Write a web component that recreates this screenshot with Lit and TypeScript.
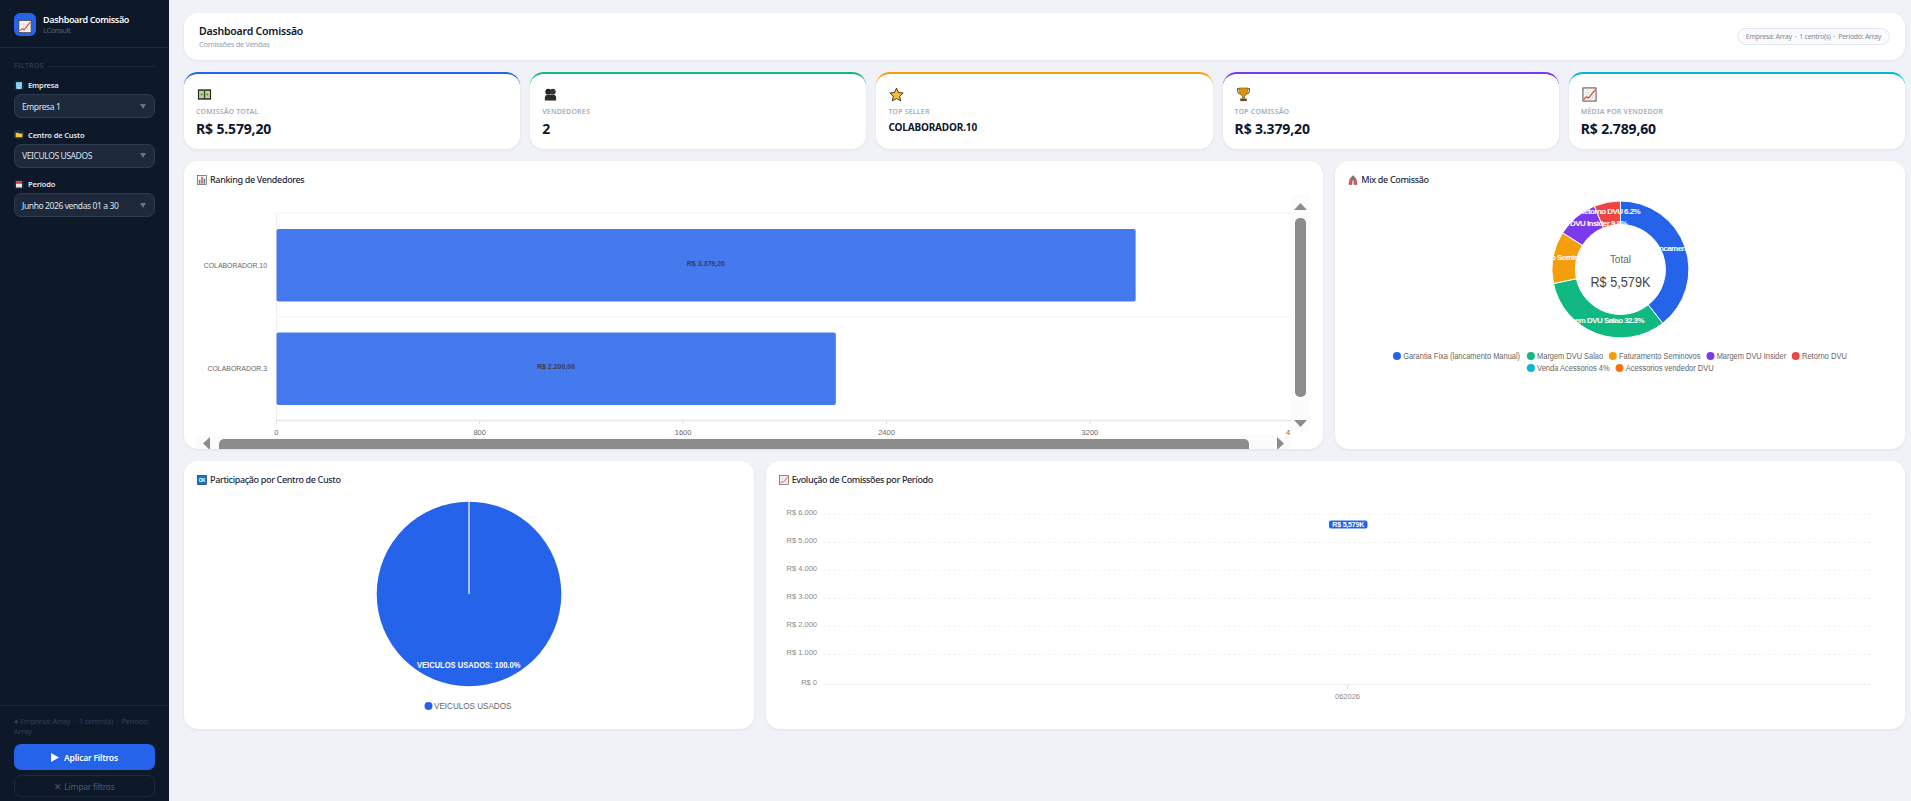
import { LitElement, html, svg, css } from 'lit';
import { customElement } from 'lit/decorators.js';

const CHART_FONT = "'Liberation Sans', Arial, sans-serif";

// icons are small hand drawn stand-ins for the emoji used by the dashboard
const icons = {
  trend: html`<svg viewBox="0 0 16 16" width="100%" height="100%"><rect x="1" y="1" width="14" height="14" fill="#f4f4f4" stroke="#444" stroke-width="1"/><path d="M1 6h14M1 11h14M6 1v14M11 1v14" stroke="#d6d6d6" stroke-width=".6"/><path d="M2 13l3-2.500 2 1.200L14 3" fill="none" stroke="#e5483c" stroke-width="1.300"/></svg>`,
  building: html`<svg viewBox="0 0 12 12" width="100%" height="100%"><rect x="2" y="1.500" width="8" height="9" fill="#7cc4ee"/><path d="M3.500 3.500h1.500M7 3.500h1.500M3.500 6h1.500M7 6h1.500" stroke="#f2fbff" stroke-width="1"/><rect x="5" y="8" width="2" height="2.500" fill="#eef6fb"/></svg>`,
  folder: html`<svg viewBox="0 0 12 12" width="100%" height="100%"><path d="M1.500 3.500h3.500l1 1h4.500v5h-9z" fill="#fbc531"/></svg>`,
  calendar: html`<svg viewBox="0 0 12 12" width="100%" height="100%"><rect x="2" y="2" width="8" height="8" fill="#e8e8e8"/><rect x="2" y="2" width="8" height="3" fill="#d13b3b"/></svg>`,
  money: html`<svg viewBox="0 0 16 16" width="100%" height="100%"><rect x="1" y="2.500" width="14" height="11" fill="#222"/><rect x="2.200" y="4" width="11.600" height="8" fill="#b9d98c"/><rect x="7.300" y="4" width="1.400" height="8" fill="#3a3a3a"/><circle cx="5" cy="8" r="1.100" fill="#5d8a3a"/><circle cx="11" cy="8" r="1.100" fill="#5d8a3a"/></svg>`,
  people: html`<svg viewBox="0 0 16 16" width="100%" height="100%"><circle cx="5.600" cy="5" r="3.100" fill="#222"/><circle cx="10.400" cy="5" r="3.100" fill="#333"/><path d="M2 14.500v-3.200c0-1.600 1.400-3 3-3h6c1.600 0 3 1.400 3 3v3.200z" fill="#2b2b2b"/></svg>`,
  star: html`<svg viewBox="0 0 16 16" width="100%" height="100%"><path d="M8 1.200l2.100 4.600 5 .6-3.700 3.400 1 5L8 12.300l-4.400 2.500 1-5L.9 6.400l5-.6z" fill="#fbb92d" stroke="#222" stroke-width=".9" stroke-linejoin="round"/></svg>`,
  trophy: html`<svg viewBox="0 0 16 16" width="100%" height="100%"><path d="M3.500 2H1.500c0 3 1 5 3.500 5.500M12.500 2h2c0 3-1 5-3.500 5.500" fill="none" stroke="#7a5200" stroke-width="1.100"/><path d="M3.500 1h9c0 5-1.500 8-3.300 8.600V12h-2.400V9.600C5 9 3.500 6 3.500 1z" fill="#d9950f" stroke="#6b4700" stroke-width=".6"/><rect x="4.500" y="12.300" width="7" height="2.700" fill="#6b4a22"/></svg>`,
  bars: html`<svg viewBox="0 0 16 16" width="100%" height="100%"><rect x=".7" y=".7" width="14.600" height="14.600" fill="#f6f6f6" stroke="#444" stroke-width="1"/><rect x="3" y="8" width="2.400" height="6" fill="#2f9e44"/><rect x="6.800" y="3" width="2.400" height="11" fill="#e5483c"/><rect x="10.600" y="6" width="2.400" height="8" fill="#2f7fd6"/></svg>`,
  mix: html`<svg viewBox="0 0 16 16" width="100%" height="100%"><path d="M7 2.500C4 4 1.500 9 1.500 15h5V9zM9 2.500C12 4 14.500 9 14.500 15h-5V9z" fill="#e0605c" stroke="#5b2b2b" stroke-width=".7"/><rect x="6.900" y="1" width="2.200" height="8" fill="#2d7a78"/></svg>`,
  ok: html`<svg viewBox="0 0 16 16" width="100%" height="100%"><rect x=".5" y=".5" width="15" height="15" fill="#0a78d4" stroke="#123" stroke-width=".8"/><text x="8" y="11" font-size="7.500" font-weight="700" text-anchor="middle" fill="#fff" font-family=${CHART_FONT}>OK</text></svg>`,
};

const kpis = [
  { icon: icons.money, label: 'Comissão Total', value: 'R$ 5.579,20', color: '#2563eb' },
  { icon: icons.people, label: 'Vendedores', value: '2', color: '#10b981' },
  { icon: icons.star, label: 'Top Seller', value: 'COLABORADOR.10', color: '#f59e0b', small: true },
  { icon: icons.trophy, label: 'Top Comissão', value: 'R$ 3.379,20', color: '#7c3aed' },
  { icon: icons.trend, label: 'Média por Vendedor', value: 'R$ 2.789,60', color: '#06b6d4' },
];

const filters = [
  { icon: icons.building, label: 'Empresa', value: 'Empresa 1' },
  { icon: icons.folder, label: 'Centro de Custo', value: 'VEICULOS USADOS' },
  { icon: icons.calendar, label: 'Período', value: 'Junho 2026 vendas 01 a 30' },
];

// donut slices, pct comes from the labels on the chart
const mixSlices = [
  { label: 'Garantia Fixa (lancamento Manual) 39.4%', pct: 39.4, color: '#2563eb' },
  { label: 'Margem DVU Salao 32.3%', pct: 32.3, color: '#10b981' },
  { label: 'Faturamento Seminovos 12.3%', pct: 12.3, color: '#f59e0b' },
  { label: 'Margem DVU Insider 9.8%', pct: 9.8, color: '#7c3aed' },
  { label: 'Retorno DVU 6.2%', pct: 6.2, color: '#ef4444' },
];

// w is the text width the chart lib ended up with
const mixLegend = [
  { x: 1397, y: 356, w: 117, text: 'Garantia Fixa (lancamento Manual)', color: '#2563eb' },
  { x: 1531, y: 356, w: 66, text: 'Margem DVU Salao', color: '#10b981' },
  { x: 1613, y: 356, w: 81.5, text: 'Faturamento Seminovos', color: '#f59e0b' },
  { x: 1710.7, y: 356, w: 69.5, text: 'Margem DVU Insider', color: '#7c3aed' },
  { x: 1796, y: 356, w: 45, text: 'Retorno DVU', color: '#ef4444' },
  { x: 1531, y: 368, w: 72.5, text: 'Venda Acessorios 4%', color: '#06b6d4' },
  { x: 1619.7, y: 368, w: 88, text: 'Acessorios vendedor DVU', color: '#f97316' },
];

function polar(cx: number, cy: number, r: number, deg: number) {
  const a = (deg * Math.PI) / 180;
  return [cx + r * Math.sin(a), cy - r * Math.cos(a)];
}

function ringPath(cx: number, cy: number, r0: number, r1: number, from: number, to: number) {
  const large = to - from > 180 ? 1 : 0;
  const [ax, ay] = polar(cx, cy, r1, from);
  const [bx, by] = polar(cx, cy, r1, to);
  const [c, d] = polar(cx, cy, r0, to);
  const [e, f] = polar(cx, cy, r0, from);
  return `M${ax} ${ay}A${r1} ${r1} 0 ${large} 1 ${bx} ${by}L${c} ${d}A${r0} ${r0} 0 ${large} 0 ${e} ${f}Z`;
}

@customElement('app-root')
export class AppRoot extends LitElement {
  static styles = css`
    :host {
      display: flex;
      min-height: 801px;
      background: #f0f2f7;
      font-family: 'Noto Sans', 'Open Sans', sans-serif;
      color: #0f172a;
    }

    /* sidebar */
    .sidebar {
      width: 169px;
      flex: none;
      height: 801px;
      box-sizing: border-box;
      background: #0d1829;
      display: flex;
      flex-direction: column;
    }
    .brand {
      height: 48px;
      box-sizing: border-box;
      padding: 13px 14px 0;
      display: flex;
      gap: 7px;
      border-bottom: 1px solid #1c2a3d;
    }
    .brand-logo {
      width: 22px;
      height: 23px;
      box-sizing: border-box;
      padding: 4px;
      background: #2563eb;
      border-radius: 6px;
    }
    .brand-name {
      font-size: 9px;
      font-weight: 600;
      line-height: 14px;
      letter-spacing: -0.35px;
      color: #f8fafc;
    }
    .brand-sub {
      font-size: 7.5px;
      line-height: 9px;
      letter-spacing: -0.4px;
      margin-top: -1px;
      color: #55647c;
    }
    .filters {
      flex: 1;
      padding: 13px 14px 0;
    }
    .filters-head {
      display: flex;
      align-items: center;
      gap: 4px;
      font-size: 6.5px;
      letter-spacing: 0.7px;
      color: #3d4c64;
      margin-bottom: 9px;
      line-height: 10px;
    }
    .filters-head::after {
      content: '';
      flex: 1;
      height: 1px;
      background: #1c2a3d;
    }
    .field {
      margin-bottom: 11.5px;
    }
    .field-label {
      display: flex;
      align-items: center;
      gap: 4px;
      height: 10px;
      margin-bottom: 4px;
      font-size: 7.5px;
      font-weight: 600;
      letter-spacing: -0.15px;
      color: #e2e8f0;
    }
    .field-icon {
      width: 10px;
      height: 9px;
      background: #1e293b;
      border-radius: 2px;
    }
    .select {
      height: 24px;
      box-sizing: border-box;
      padding: 0 8px 0 7px;
      display: flex;
      align-items: center;
      justify-content: space-between;
      background: #1e293b;
      border: 1px solid #2f3c50;
      border-radius: 7px;
      font-size: 8.5px;
      letter-spacing: -0.4px;
      color: #dbe4f0;
    }
    .caret {
      width: 0;
      height: 0;
      border-left: 3px solid transparent;
      border-right: 3px solid transparent;
      border-top: 5px solid #64748b;
    }
    .side-foot {
      border-top: 1px solid #1c2a3d;
      padding: 10px 14px 4px;
    }
    .side-note {
      font-size: 7.5px;
      line-height: 10px;
      letter-spacing: -0.25px;
      color: #334155;
      margin-bottom: 8px;
    }
    .btn {
      display: flex;
      align-items: center;
      justify-content: center;
      box-sizing: border-box;
      border-radius: 7px;
      font-size: 8.5px;
      letter-spacing: -0.2px;
    }
    .btn-apply {
      height: 26px;
      gap: 5px;
      background: #2563eb;
      color: #fff;
      font-weight: 600;
      margin-bottom: 5px;
    }
    .btn-clear {
      height: 22px;
      gap: 2px;
      border: 1px solid #1e293b;
      color: #4a5a71;
    }

    /* main area */
    .main {
      flex: 1;
      min-width: 0;
      padding: 13px 6px 0 15px;
      display: flex;
      flex-direction: column;
      gap: 12px;
    }
    .card {
      background: #fff;
      border-radius: 14px;
      box-shadow: 0 1px 3px rgba(15, 23, 42, 0.07);
      box-sizing: border-box;
    }
    .topbar {
      height: 47px;
      padding: 0 15px;
      display: flex;
      align-items: center;
      justify-content: space-between;
    }
    .topbar h1 {
      margin: 0;
      font-size: 10.5px;
      font-weight: 600;
      line-height: 15px;
      letter-spacing: -0.2px;
      color: #0f172a;
    }
    .topbar p {
      margin: 0;
      font-size: 7.5px;
      line-height: 10px;
      letter-spacing: -0.3px;
      color: #94a3b8;
    }
    .pill {
      height: 17px;
      box-sizing: border-box;
      padding: 0 8px;
      display: flex;
      align-items: center;
      background: #f8fafc;
      border: 1px solid #e2e8f0;
      border-radius: 999px;
      font-size: 7px;
      letter-spacing: -0.3px;
      color: #7d8ba0;
      white-space: pre;
    }
    .kpis {
      display: grid;
      grid-template-columns: repeat(5, 1fr);
      gap: 10px;
    }
    .kpi {
      height: 77px;
      padding: 11px 12px 0;
      border-top: 2px solid;
    }
    .kpi-icon {
      width: 15px;
      height: 15px;
      margin: 0 0 6.5px 1px;
    }
    .kpi-label {
      font-size: 7px;
      font-weight: 600;
      line-height: 10px;
      letter-spacing: 0.2px;
      text-transform: uppercase;
      color: #a0aec0;
      margin-bottom: 2px;
    }
    .kpi-value {
      font-size: 14px;
      font-weight: 700;
      line-height: 20px;
      letter-spacing: -0.15px;
      color: #0f172a;
    }
    .kpi-value.small {
      font-size: 10px;
      line-height: 16px;
    }
    .row {
      display: grid;
      gap: 12px;
    }
    .row-a {
      grid-template-columns: 2fr 1fr;
    }
    .row-b {
      grid-template-columns: 1fr 2fr;
    }
    .panel {
      display: flex;
      flex-direction: column;
      overflow: hidden;
    }
    .row-a .panel {
      height: 288px;
    }
    .row-b .panel {
      height: 268px;
    }
    .panel-title {
      flex: none;
      height: 34px;
      box-sizing: border-box;
      padding: 3px 13px 0;
      display: flex;
      align-items: center;
      gap: 3px;
      font-size: 9px;
      font-weight: 500;
      letter-spacing: -0.35px;
      color: #1e293b;
    }
    .panel-icon {
      width: 10px;
      height: 10px;
      flex: none;
    }
    .panel svg.chart {
      display: block;
      flex: 1;
      min-height: 0;
      width: 100%;
    }
  `;

  // ranking chart plus the scrollbars of the chart's own scroll box
  private rankingChart() {
    const x0 = 276.3;
    const perUnit = 203.4 / 800;
    const thumb = '#8c8c8c';
    const ticks = [0, 800, 1600, 2400, 3200, 4000];
    const rows = [
      { name: 'COLABORADOR.10', nameW: 63.3, value: 3379.2, text: 'R$ 3.379,20', y: 229 },
      { name: 'COLABORADOR.3', nameW: 59.5, value: 2200, text: 'R$ 2.200,00', y: 332.5 },
    ];
    return svg`
      <svg class="chart" viewBox="184 195 1139 254" preserveAspectRatio="xMinYMin" font-family=${CHART_FONT}>
        <path d="M276 213H1291M276 317H1291" stroke="#f3f3f3"/>
        <path d="M276.5 213V421" stroke="#f0f0f0"/>
        <path d="M276 420.5H1291" stroke="#e6e6e6" stroke-width="1.5"/>
        ${ticks.slice(0, 5).map((t) => svg`<path d="M${x0 + t * perUnit} 421v3" stroke="#ddd"/>`)}
        ${rows.map((r) => svg`
          <rect x="276.5" y=${r.y} width=${r.value * perUnit} height="72.5" rx="2" fill="#4579ee"/>
          <text x=${x0 + (r.value * perUnit) / 2} y=${r.y + 36.5} font-size="7" font-weight="700" fill="#3a3f4a" text-anchor="middle">${r.text}</text>
          <text x=${267 - r.nameW} y=${r.y + 38.5} font-size="8" fill="#666" textLength=${r.nameW} lengthAdjust="spacingAndGlyphs">${r.name}</text>
        `)}
        ${ticks.slice(0, 5).map((t) => svg`<text x=${x0 + t * perUnit} y="435" font-size="7.5" fill="#666" text-anchor="middle">${t}</text>`)}
        <text x="1288" y="435" font-size="7.5" fill="#666" text-anchor="middle">4</text>

        <rect x="1291" y="195" width="19" height="237" fill="#fbfbfb"/>
        <path d="M1300.5 203l6.5 7h-13z" fill=${thumb}/>
        <rect x="1295" y="218" width="11" height="179" rx="5" fill=${thumb}/>
        <path d="M1300.5 427l6.5-7h-13z" fill=${thumb}/>

        <rect x="196" y="435" width="1095" height="14" fill="#fbfbfb"/>
        <rect x="1291" y="432" width="19" height="17" fill="#fff"/>
        <path d="M203 443.5l7-6.5v13z" fill=${thumb}/>
        <rect x="219" y="439" width="1030" height="14" rx="5" fill=${thumb}/>
        <path d="M1284 443.5l-7-6.5v13z" fill=${thumb}/>
      </svg>
    `;
  }

  private mixChart() {
    const cx = 1620.6;
    const cy = 269.5;
    let start = 0;
    const parts = mixSlices.map((s) => {
      const from = start;
      const to = start + s.pct * 3.6;
      start = to;
      const [lx, ly] = polar(cx, cy, 56.75, (from + to) / 2);
      return { ...s, d: ringPath(cx, cy, 45, 68.5, from, to), lx, ly };
    });
    return svg`
      <svg class="chart" viewBox="1335 195 570 254" preserveAspectRatio="xMinYMin" font-family=${CHART_FONT}>
        ${parts.map((p) => svg`<path d=${p.d} fill=${p.color} stroke="#fff" stroke-width="1"/>`)}
        ${parts.map((p) => svg`<text x=${p.lx} y=${p.ly + 0.5} font-size="8" font-weight="700" letter-spacing="-0.55" fill="#fff" text-anchor="middle">${p.label}</text>`)}
        <text x=${cx} y="263.5" font-size="10" fill="#666" text-anchor="middle">Total</text>
        <text x=${cx - 30} y="287" font-size="14" fill="#444" textLength="60" lengthAdjust="spacingAndGlyphs">R$ 5,579K</text>
        ${mixLegend.map((l) => svg`
          <circle cx=${l.x} cy=${l.y} r="4" fill=${l.color}/>
          <text x=${l.x + 6.2} y=${l.y + 3} font-size="9" fill="#666" textLength=${l.w} lengthAdjust="spacingAndGlyphs">${l.text}</text>
        `)}
      </svg>
    `;
  }

  private centerChart() {
    return svg`
      <svg class="chart" viewBox="184 495 569 234" preserveAspectRatio="xMinYMin" font-family=${CHART_FONT}>
        <circle cx="469" cy="594" r="92.3" fill="#2563eb"/>
        <path d="M469 501.7V594" stroke="#fff" stroke-width="1.2"/>
        <text x="417" y="668" font-size="9" font-weight="700" fill="#fff" textLength="103.4" lengthAdjust="spacingAndGlyphs">VEICULOS USADOS: 100.0%</text>
        <circle cx="428.5" cy="706" r="4" fill="#2563eb"/>
        <text x="434" y="709" font-size="9" fill="#666" textLength="77.4" lengthAdjust="spacingAndGlyphs">VEICULOS USADOS</text>
      </svg>
    `;
  }

  private evolutionChart() {
    const lines = [
      { v: 'R$ 6.000', y: 514 },
      { v: 'R$ 5.000', y: 542 },
      { v: 'R$ 4.000', y: 570 },
      { v: 'R$ 3.000', y: 598 },
      { v: 'R$ 2.000', y: 626 },
      { v: 'R$ 1.000', y: 654 },
      { v: 'R$ 0', y: 684 },
    ];
    return svg`
      <svg class="chart" viewBox="766 495 1139 234" preserveAspectRatio="xMinYMin" font-family=${CHART_FONT}>
        ${lines.map((l) => svg`
          <path d="M823.5 ${l.y}.5H1871" stroke=${l.y === 684 ? '#e6e6e6' : '#eeeeee'} stroke-dasharray=${l.y === 684 ? '3 1' : '2 3'}/>
          <text x="817" y=${l.y + 1} font-size="7.5" fill="#888" text-anchor="end">${l.v}</text>
        `)}
        <path d="M1347.5 685v4" stroke="#ddd"/>
        <text x="1347.5" y="699" font-size="7.5" fill="#888" text-anchor="middle">062026</text>
        <rect x="1329" y="520.5" width="38.5" height="8" rx="2" fill="#2563eb"/>
        <text x="1348.2" y="527" font-size="7" font-weight="700" letter-spacing="-0.2" fill="#fff" text-anchor="middle">R$ 5,579K</text>
      </svg>
    `;
  }

  private renderSidebar() {
    return html`
      <aside class="sidebar">
        <div class="brand">
          <div class="brand-logo">${icons.trend}</div>
          <div>
            <div class="brand-name">Dashboard Comissão</div>
            <div class="brand-sub">LConsult</div>
          </div>
        </div>
        <div class="filters">
          <div class="filters-head">FILTROS</div>
          ${filters.map(
            (f) => html`
              <div class="field">
                <div class="field-label"><span class="field-icon">${f.icon}</span>${f.label}</div>
                <div class="select">${f.value}<span class="caret"></span></div>
              </div>
            `
          )}
        </div>
        <div class="side-foot">
          <div class="side-note">● Empresa: Array &nbsp;·&nbsp; 1 centro(s) &nbsp;·&nbsp; Período: Array</div>
          <div class="btn btn-apply">
            <svg width="8" height="9" viewBox="0 0 8 9"><path d="M0 0l8 4.5-8 4.5z" fill="#fff"/></svg>
            Aplicar Filtros
          </div>
          <div class="btn btn-clear">✕ Limpar filtros</div>
        </div>
      </aside>
    `;
  }

  render() {
    return html`
      ${this.renderSidebar()}
      <main class="main">
        <header class="card topbar">
          <div>
            <h1>Dashboard Comissão</h1>
            <p>Comissões de Vendas</p>
          </div>
          <div class="pill">Empresa: Array  ·  1 centro(s)  ·  Período: Array</div>
        </header>

        <section class="kpis">
          ${kpis.map(
            (k) => html`
              <div class="card kpi" style="border-top-color: ${k.color}">
                <div class="kpi-icon">${k.icon}</div>
                <div class="kpi-label">${k.label}</div>
                <div class="kpi-value ${k.small ? 'small' : ''}">${k.value}</div>
              </div>
            `
          )}
        </section>

        <section class="row row-a">
          <div class="card panel">
            <div class="panel-title"><span class="panel-icon">${icons.bars}</span>Ranking de Vendedores</div>
            ${this.rankingChart()}
          </div>
          <div class="card panel">
            <div class="panel-title"><span class="panel-icon">${icons.mix}</span>Mix de Comissão</div>
            ${this.mixChart()}
          </div>
        </section>

        <section class="row row-b">
          <div class="card panel">
            <div class="panel-title"><span class="panel-icon">${icons.ok}</span>Participação por Centro de Custo</div>
            ${this.centerChart()}
          </div>
          <div class="card panel">
            <div class="panel-title"><span class="panel-icon">${icons.trend}</span>Evolução de Comissões por Período</div>
            ${this.evolutionChart()}
          </div>
        </section>
      </main>
    `;
  }
}

declare global {
  interface HTMLElementTagNameMap {
    'app-root': AppRoot;
  }
}
